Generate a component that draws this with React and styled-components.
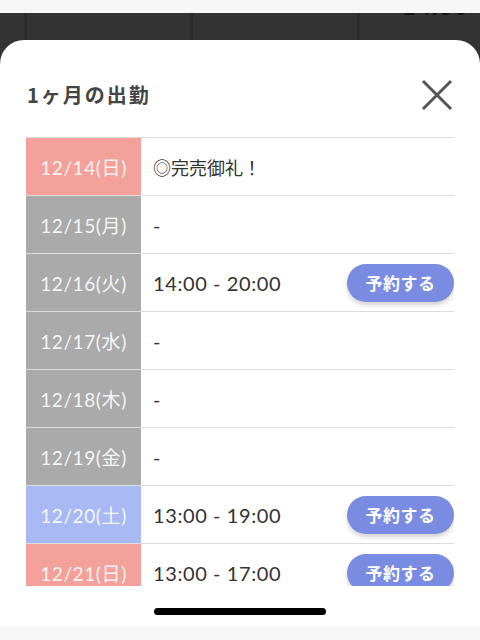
import React from "react";
import styled, { createGlobalStyle } from "styled-components";

const Global = createGlobalStyle`
  html, body { margin: 0; padding: 0; }
  body { font-family: "Noto Sans CJK JP", "Noto Sans", sans-serif; background: #f7f7f7; }
  * { box-sizing: border-box; }
`;

const Page = styled.div`
  width: 480px;
  height: 640px;
  display: flex;
  flex-direction: column;
  background: #f7f7f7;
  overflow: hidden;
`;

const StatusStrip = styled.div`
  height: 13px;
  flex: none;
  background: #f7f7f7;
`;

const Backdrop = styled.div`
  flex: 1;
  display: flex;
  flex-direction: column;
  background: #333333;
  min-height: 0;
`;

const BgRow = styled.div`
  height: 27px;
  flex: none;
  display: grid;
  grid-template-columns: 24px 166px 167px 1fr;
  overflow: hidden;
`;

const BgCell = styled.div`
  border-left: 3px solid #2b2b2b;
  overflow: hidden;
  display: flex;
  justify-content: flex-end;
  padding-right: 12px;
`;

const BgTime = styled.span`
  color: #111;
  font-family: "Lato", sans-serif;
  font-size: 26px;
  line-height: 26px;
  margin-top: -21px;
`;

const Sheet = styled.div`
  flex: 1;
  display: flex;
  flex-direction: column;
  background: #fff;
  border-radius: 24px 24px 0 0;
  padding: 0 26px;
  min-height: 0;
`;

const Header = styled.div`
  height: 98px;
  flex: none;
  display: flex;
  align-items: center;
  justify-content: space-between;
  padding-left: 1px;
  padding-top: 12px;
  border-bottom: 1px solid #dcdcdc;
`;

const Title = styled.h2`
  margin: 0;
  font-size: 20px;
  font-weight: 700;
  color: #444;
  letter-spacing: 2px;
`;

const CloseButton = styled.button`
  border: none;
  background: none;
  padding: 0;
  width: 36px;
  height: 36px;
  margin-right: -1px;
  display: flex;
  align-items: center;
  justify-content: center;
  cursor: pointer;
`;

const Scroll = styled.div`
  height: 448px;
  flex: none;
  overflow: hidden;
`;

const Row = styled.div`
  display: flex;
  height: 58px;
  border-bottom: 1px solid #dcdcdc;
`;

const DateCell = styled.div`
  width: 115px;
  flex: none;
  display: flex;
  align-items: center;
  justify-content: center;
  background: ${(p) => p.$bg};
  color: rgba(255, 255, 255, 0.9);
  font-family: "Lato", "Noto Sans CJK JP", sans-serif;
  font-size: 19px;
  letter-spacing: 0.6px;
`;

const Content = styled.div`
  flex: 1;
  display: flex;
  align-items: center;
  justify-content: space-between;
  padding-left: 12px;
  color: #333;
  font-size: 20px;
  letter-spacing: 0.6px;
  font-family: "Lato", "Noto Sans CJK JP", sans-serif;
`;

const Note = styled.span`
  font-family: "Noto Sans CJK JP", sans-serif;
  font-size: 18px;
  letter-spacing: 0;
`;

const ReserveButton = styled.button`
  width: 107px;
  height: 38px;
  border: none;
  border-radius: 19px;
  background: #7a8ce2;
  color: #fff;
  font-family: "Noto Sans CJK JP", sans-serif;
  font-size: 17px;
  font-weight: 700;
  letter-spacing: 0.5px;
  box-shadow: 0 3px 5px rgba(0, 0, 0, 0.18);
  cursor: pointer;
`;

const Footer = styled.div`
  flex: 1;
  display: flex;
  justify-content: center;
  padding-top: 22px;
`;

const HomeBar = styled.div`
  width: 172px;
  height: 7px;
  border-radius: 4px;
  background: #000;
`;

const BottomStrip = styled.div`
  height: 14px;
  flex: none;
  background: #f7f7f7;
`;

const COLORS = { sun: "#f4a19b", wk: "#aaaaaa", sat: "#a9b9f4" };

const rows = [
  { d: "12/14(日)", c: COLORS.sun, note: "◎完売御礼！" },
  { d: "12/15(月)", c: COLORS.wk, text: "-" },
  { d: "12/16(火)", c: COLORS.wk, text: "14:00 - 20:00", btn: true },
  { d: "12/17(水)", c: COLORS.wk, text: "-" },
  { d: "12/18(木)", c: COLORS.wk, text: "-" },
  { d: "12/19(金)", c: COLORS.wk, text: "-" },
  { d: "12/20(土)", c: COLORS.sat, text: "13:00 - 19:00", btn: true },
  { d: "12/21(日)", c: COLORS.sun, text: "13:00 - 17:00", btn: true },
];

export default function App() {
  return (
    <Page>
      <Global />
      <StatusStrip />
      <Backdrop>
        <BgRow>
          <div />
          <BgCell />
          <BgCell />
          <BgCell>
            <BgTime>14:00</BgTime>
          </BgCell>
        </BgRow>
        <Sheet>
          <Header>
            <Title>1ヶ月の出勤</Title>
            <CloseButton aria-label="close">
              <svg width="32" height="32" viewBox="0 0 32 32">
                <path d="M2 2 L30 30 M30 2 L2 30" stroke="#555" strokeWidth="3" fill="none" />
              </svg>
            </CloseButton>
          </Header>
          <Scroll>
            {rows.map((r) => (
              <Row key={r.d}>
                <DateCell $bg={r.c}>{r.d}</DateCell>
                <Content>
                  {r.note ? <Note>{r.note}</Note> : <span>{r.text}</span>}
                  {r.btn && <ReserveButton>予約する</ReserveButton>}
                </Content>
              </Row>
            ))}
          </Scroll>
          <Footer>
            <HomeBar />
          </Footer>
        </Sheet>
      </Backdrop>
      <BottomStrip />
    </Page>
  );
}
